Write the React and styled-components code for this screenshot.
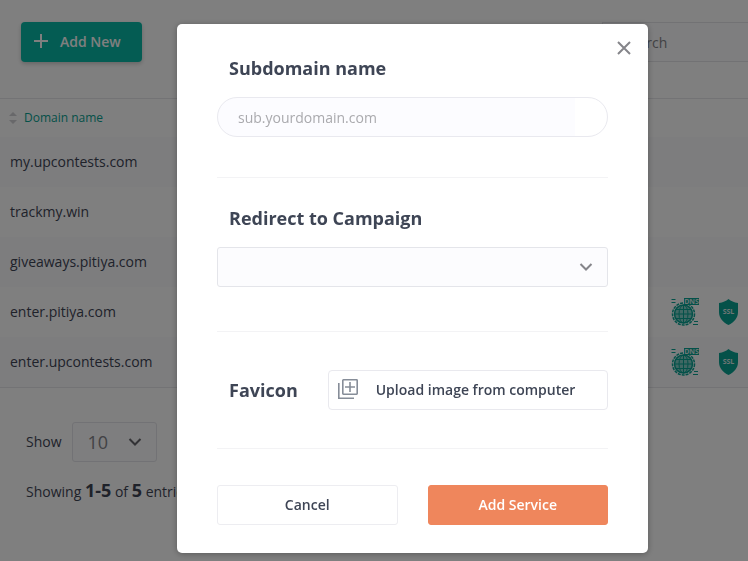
import styled, { createGlobalStyle } from "styled-components";

const domains = [
  { name: "my.upcontests.com", secured: false },
  { name: "trackmy.win", secured: false },
  { name: "giveaways.pitiya.com", secured: false },
  { name: "enter.pitiya.com", secured: true },
  { name: "enter.upcontests.com", secured: true },
];

const GlobalStyle = createGlobalStyle`
  * {
    box-sizing: border-box;
  }
  body {
    margin: 0;
    background: white;
    color: #3e4555;
    font-family: "Open Sans", "Noto Sans", sans-serif;
    font-size: 14px;
    line-height: 20px;
  }
  button, input, select {
    font-family: inherit;
    font-size: 14px;
    color: inherit;
    margin: 0;
  }
`;

const Page = styled.div`
  min-height: 100vh;
  overflow: hidden;
`;

const Toolbar = styled.header`
  display: flex;
  justify-content: space-between;
  align-items: center;
  padding: 22px 0 36px 21px;
`;

const AddButton = styled.button`
  display: flex;
  align-items: center;
  gap: 12px;
  height: 40px;
  padding: 0 21px 2px 13px;
  border: none;
  border-radius: 4px;
  background: #08b8a6;
  color: white;
  font-weight: 600;
  box-shadow: 0 2px 4px rgba(0, 0, 0, 0.2);
`;

const Search = styled.input`
  width: 146px;
  height: 40px;
  padding: 0 20px;
  border: 1px solid #e4e4e8;
  border-right: none;
  background: #fcfcfe;
  &::placeholder {
    color: #85858a;
    opacity: 1;
  }
`;

const Table = styled.table`
  width: 100%;
  border-collapse: separate;
  border-spacing: 0;
  border-top: 1px solid #e6e6ea;
  border-bottom: 1px solid #e6e6ea;
`;

const HeadCell = styled.th`
  height: 38px;
  padding: 0 9px;
  text-align: left;
  font-size: 12px;
  font-weight: 400;
  color: #08a292;
`;

const SortLabel = styled.span`
  display: flex;
  align-items: center;
  gap: 7px;
`;

const Row = styled.tr`
  &:nth-child(odd) {
    background: #fafafd;
  }
`;

const Cell = styled.td`
  height: 50px;
  padding: 0 10px;
`;

const Badges = styled.div`
  display: flex;
  justify-content: flex-end;
  align-items: center;
  gap: 20px;
`;

const Footer = styled.footer`
  padding: 34px 26px;
`;

const ShowRow = styled.label`
  display: flex;
  align-items: center;
  gap: 10px;
`;

const Showing = styled.p`
  margin: 16px 0 0;
  line-height: 24px;
  b {
    font-size: 18px;
  }
`;

const SelectWrap = styled.span`
  display: grid;
  align-items: center;
  width: ${(props) => props.$width};
  svg {
    grid-area: 1 / 1;
    justify-self: end;
    margin-right: 15px;
    pointer-events: none;
  }
`;

const Select = styled.select`
  grid-area: 1 / 1;
  appearance: none;
  width: 100%;
  height: 40px;
  padding: 0 15px;
  border: 1px solid #e4e5ea;
  border-radius: 3px;
  background: #fcfcfe;
  font-size: 18px;
  color: #85858a;
`;

const Overlay = styled.div`
  position: fixed;
  inset: 0;
  overflow: auto;
  padding: 24px 100px 8px 177px;
  background: rgba(0, 0, 0, 0.5);
`;

const Modal = styled.form`
  position: relative;
  padding: 0 40px 28px;
  border-radius: 5px;
  background: white;
  box-shadow: 0 1px 6px rgba(0, 0, 0, 0.3);
`;

const Close = styled.button`
  position: absolute;
  top: 12px;
  right: 12px;
  display: flex;
  padding: 4px;
  border: none;
  background: none;
`;

const Section = styled.div`
  padding: ${(props) => props.$pad};
  border-bottom: 1px solid #f3f3f5;
`;

const Title = styled.label`
  display: block;
  padding-left: 12px;
  font-size: 18px;
  font-weight: 700;
  line-height: 24px;
`;

const Field = styled.div`
  display: grid;
  gap: 17px;
`;

const TextInput = styled.input`
  width: 100%;
  height: 40px;
  padding: 0 20px;
  border: 1px solid #e9e9ef;
  border-radius: 20px;
  background: linear-gradient(to left, white 32px, #fcfcff 32px);
  &::placeholder {
    color: #aaaaae;
    opacity: 1;
  }
`;

const UploadRow = styled.div`
  display: flex;
  align-items: center;
  gap: 30px;
`;

const UploadButton = styled.button`
  display: flex;
  flex: 1;
  align-items: center;
  gap: 18px;
  height: 40px;
  padding: 0 9px 2px;
  border: 1px solid #e9e9ee;
  border-radius: 4px;
  background: white;
  font-weight: 600;
`;

const Actions = styled.div`
  display: flex;
  gap: 30px;
  padding-top: 36px;
`;

const ActionButton = styled.button`
  flex: 1;
  height: 40px;
  padding: 0 0 2px;
  border: 1px solid ${(props) => (props.$primary ? "#ef865c" : "#ededf1")};
  border-radius: 3px;
  background: ${(props) => (props.$primary ? "#ef865c" : "white")};
  color: ${(props) => (props.$primary ? "white" : "#3e4555")};
  font-weight: 600;
`;

const Chevron = ({ color = "#85858a" }) => (
  <svg width="14" height="10" viewBox="0 0 14 10" fill="none" stroke={color} strokeWidth="2">
    <path d="M1.5 2 7 7.5 12.5 2" />
  </svg>
);

const PlusIcon = () => (
  <svg width="14" height="14" viewBox="0 0 14 14" stroke="currentColor" strokeWidth="2">
    <path d="M7 0v14M0 7h14" />
  </svg>
);

const CloseIcon = () => (
  <svg width="16" height="16" viewBox="0 0 16 16" stroke="#85858a" strokeWidth="2">
    <path d="M2 2 14 14M14 2 2 14" />
  </svg>
);

const SortIcon = () => (
  <svg width="8" height="12" viewBox="0 0 8 12" fill="#d0d0d4">
    <path d="M4 0 8 4H0zM4 12 0 8h8z" />
  </svg>
);

const UploadIcon = () => (
  <svg width="20" height="20" viewBox="0 0 20 20" fill="none" stroke="#868d98" strokeWidth="1.6">
    <rect x="4.8" y="0.8" width="14.4" height="14.4" rx="0.6" />
    <path d="M12 3v10M7 8h10" />
    <path d="M0.8 4v15.200H16" />
  </svg>
);

const DnsIcon = () => (
  <svg width="28" height="28" viewBox="0 0 28 28" role="img" aria-label="DNS">
    <g fill="none" stroke="#08a292">
      <circle cx="12.5" cy="16" r="9" fill="#08a292" fillOpacity="0.5" strokeWidth="1.5" />
      <circle cx="12.5" cy="16" r="11" strokeWidth="1.5" strokeDasharray="3 1" />
      <ellipse cx="12.5" cy="16" rx="4.5" ry="9" />
      <path d="M12.5 7v18M3.500 16h18M5 11.500h15M5 20.500h15" />
      <path d="M0.500 1.500h4M0.500 4.500h4M23 23.500h4M22 26.500h5" />
    </g>
    <rect x="13" y="0" width="15" height="7" fill="#08a292" />
    <text x="20.5" y="6" textAnchor="middle" fontSize="7" fontWeight="700" fill="#dcebe9">
      DNS
    </text>
  </svg>
);

const SslIcon = () => (
  <svg width="19" height="26" viewBox="0 0 19 26" role="img" aria-label="SSL">
    <path d="M9.500 0C12 2 15 3.500 19 4v9c0 6-4 10.500-9.500 13C4 23.500 0 19 0 13V4c4-.5 7-2 9.500-4z" fill="#08a292" />
    <text x="9.5" y="15" textAnchor="middle" fontSize="7" fontWeight="700" fill="#dcebe9">
      SSL
    </text>
  </svg>
);

const AddServiceModal = () => {
  return (
    <Overlay>
      <Modal role="dialog" aria-label="Add service">
        <Close type="button" aria-label="Close">
          <CloseIcon />
        </Close>
        <Section $pad="32px 0 40px">
          <Field>
            <Title htmlFor="subdomain">Subdomain name</Title>
            <TextInput id="subdomain" type="text" placeholder="sub.yourdomain.com" />
          </Field>
        </Section>
        <Section $pad="28px 0 44px">
          <Field>
            <Title htmlFor="campaign">Redirect to Campaign</Title>
            <SelectWrap $width="100%">
              <Select id="campaign">
                <option value=""></option>
              </Select>
              <Chevron />
            </SelectWrap>
          </Field>
        </Section>
        <Section $pad="38px 0">
          <UploadRow>
            <Title htmlFor="favicon">Favicon</Title>
            <UploadButton id="favicon" type="button">
              <UploadIcon />
              Upload image from computer
            </UploadButton>
          </UploadRow>
        </Section>
        <Actions>
          <ActionButton type="button">Cancel</ActionButton>
          <ActionButton type="button" $primary>
            Add Service
          </ActionButton>
        </Actions>
      </Modal>
    </Overlay>
  );
};

const App = () => {
  return (
    <>
      <GlobalStyle />
      <Page>
        <Toolbar>
          <AddButton type="button">
            <PlusIcon />
            Add New
          </AddButton>
          <Search type="search" placeholder="Search" aria-label="Search" />
        </Toolbar>
        <Table>
          <thead>
            <tr>
              <HeadCell>
                <SortLabel>
                  <SortIcon />
                  Domain name
                </SortLabel>
              </HeadCell>
              <HeadCell />
            </tr>
          </thead>
          <tbody>
            {domains.map((domain) => (
              <Row key={domain.name}>
                <Cell>{domain.name}</Cell>
                <Cell>
                  {domain.secured && (
                    <Badges>
                      <DnsIcon />
                      <SslIcon />
                    </Badges>
                  )}
                </Cell>
              </Row>
            ))}
          </tbody>
        </Table>
        <Footer>
          <ShowRow>
            Show
            <SelectWrap $width="85px">
              <Select defaultValue="10">
                <option>10</option>
                <option>25</option>
                <option>50</option>
              </Select>
              <Chevron color="#65656a" />
            </SelectWrap>
          </ShowRow>
          <Showing>
            Showing <b>1-5</b> of <b>5</b> entries
          </Showing>
        </Footer>
      </Page>
      <AddServiceModal />
    </>
  );
};

export default App;
